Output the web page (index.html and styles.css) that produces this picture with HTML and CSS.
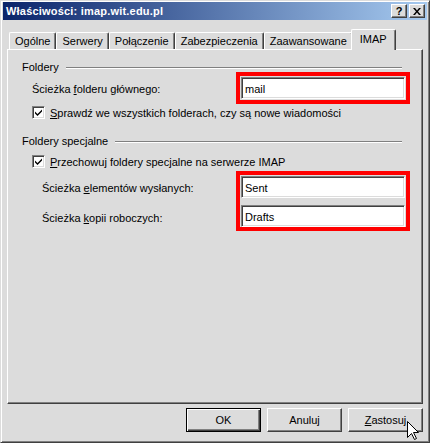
FILE: index.html
```html
<!DOCTYPE html>
<html lang="pl">
<head>
  <meta charset="UTF-8">
  <title>Właściwości: imap.wit.edu.pl</title>
  <link rel="stylesheet" href="styles.css">
</head>
<body>
<div class="window">
  <div class="titlebar">
    <span class="title">Właściwości: imap.wit.edu.pl</span>
    <div class="caption">
      <span class="cap-btn cap-help">?</span>
      <span class="cap-btn">
        <svg width="8" height="7" viewBox="0 0 8 7"><path d="M0 0h2l2 2.5L6 0h2L5 3.5 8 7H6L4 4.5 2 7H0l3-3.5z" fill="#000"/></svg>
      </span>
    </div>
  </div>

  <div class="content">
    <div class="tabs">
      <div class="tab">Ogólne</div>
      <div class="tab">Serwery</div>
      <div class="tab">Połączenie</div>
      <div class="tab">Zabezpieczenia</div>
      <div class="tab">Zaawansowane</div>
      <div class="tab active">IMAP</div>
    </div>

    <div class="panel">
      <div class="legend"><span>Foldery</span><i class="legend-line"></i></div>
      <div class="group">
        <div class="row">
          <span class="label">Ścieżka <u>f</u>olderu głównego:</span>
          <div class="mark mark-one">
            <div class="field">mail</div>
          </div>
        </div>
        <div class="check">
          <span class="box"><svg width="7" height="7" viewBox="0 0 7 7"><path d="M0 2.5l2.5 2.5L7 0.5v2L2.5 7 0 4.5z" fill="#000"/></svg></span>
          <span><u>S</u>prawdź we wszystkich folderach, czy są nowe wiadomości</span>
        </div>
      </div>

      <div class="legend legend-two"><span>Foldery specjalne</span><i class="legend-line"></i></div>
      <div class="group">
        <div class="check check-two">
          <span class="box"><svg width="7" height="7" viewBox="0 0 7 7"><path d="M0 2.5l2.5 2.5L7 0.5v2L2.5 7 0 4.5z" fill="#000"/></svg></span>
          <span><u>P</u>rzechowuj foldery specjalne na serwerze IMAP</span>
        </div>
        <div class="row row-paths">
          <div class="labels">
            <span class="label">Ścieżka <u>e</u>lementów wysłanych:</span>
            <span class="label">Ścieżka <u>k</u>opii roboczych:</span>
          </div>
          <div class="mark mark-two">
            <div class="field">Sent</div>
            <div class="field">Drafts</div>
          </div>
        </div>
      </div>
    </div>

    <div class="buttons">
      <div class="btn btn-default">OK</div>
      <div class="btn">Anuluj</div>
      <div class="btn"><u>Z</u>astosuj</div>
    </div>
  </div>

  <svg class="cursor" width="12" height="19" viewBox="0 0 12 19">
    <path d="M0.5 0.5V16.5L4.5 12.5L7.5 18.5L9.5 17.5L6.5 11.5H11.5Z" fill="#fff" stroke="#000" stroke-width="1"/>
  </svg>
</div>
</body>
</html>
```

FILE: styles.css
```css
body {
  margin: 0;
  background: #dcdcdc;
  font-family: "Liberation Sans", Arial, sans-serif;
  font-size: 11px;
  color: #000;
}
.window {
  position: relative;
  width: 430px;
  height: 443px;
  box-sizing: border-box;
  background: #dcdcdc;
  border: 1px solid;
  border-color: #dcdcdc #404040 #404040 #dcdcdc;
  box-shadow: inset 1px 1px #fff, inset -1px -1px #808080;
  padding: 1px 2px 2px 2px;
}

/* pasek tytułu */
.titlebar {
  height: 18px;
  display: flex;
  align-items: center;
  justify-content: space-between;
  background: linear-gradient(to right, #0a246a, #a6caf0);
  padding: 0 2px 0 3px;
}
.title {
  color: #fff;
  font-weight: bold;
  font-size: 11px;
  letter-spacing: 0.2px;
}
.caption {
  display: flex;
  gap: 2px;
}
.cap-btn {
  width: 16px;
  height: 14px;
  box-sizing: border-box;
  display: flex;
  align-items: center;
  justify-content: center;
  background: #dcdcdc;
  border: 1px solid;
  border-color: #fff #404040 #404040 #fff;
  box-shadow: inset -1px -1px #808080;
}
.cap-help {
  font-weight: bold;
  font-size: 11px;
  line-height: 12px;
}

.content {
  padding: 9px 4px 0 4px;
}

/* zakładki */
.tabs {
  display: flex;
  align-items: flex-end;
  height: 20px;
  padding-left: 2px;
}
.tab {
  height: 17px;
  box-sizing: border-box;
  padding: 2px 5px 0 5px;
  border: 1px solid;
  border-bottom: none;
  border-color: #fff #404040 #fff #fff;
  border-radius: 2px 2px 0 0;
  box-shadow: inset -1px 0 #808080;
}
.tab.active {
  position: relative;
  z-index: 1;
  height: 21px;
  margin: 0 -2px -1px -2px;
  padding: 3px 8px 0 8px;
  background: #dcdcdc;
}

/* panel */
.panel {
  height: 355px;
  box-sizing: border-box;
  border: 1px solid;
  border-color: #fff #404040 #404040 #fff;
  box-shadow: inset -1px -1px #808080;
  padding: 12px 12px 0 14px;
}
.legend {
  display: flex;
  align-items: center;
  height: 11px;
  line-height: 11px;
}
.legend-line {
  flex: 1;
  height: 0;
  border-top: 1px solid #808080;
  border-bottom: 1px solid #fff;
  margin: 0 8px 0 7px;
}
.legend-two {
  margin-top: 17px;
}
.group {
  padding-left: 10px;
}
.row {
  display: flex;
  align-items: center;
  justify-content: space-between;
}
.mark {
  width: 174px;
  box-sizing: border-box;
  border: 4px solid #ff0000;
  padding: 1px;
  display: flex;
  flex-direction: column;
}
.mark-one {
  margin-top: -1px;
}
.mark-two {
  gap: 7px;
  padding: 1px 1px 0 1px;
}
.field {
  height: 22px;
  box-sizing: border-box;
  background: #fff;
  border: 1px solid;
  border-color: #808080 #fff #fff #808080;
  box-shadow: inset 1px 1px #404040, inset -1px -1px #dcdcdc;
  padding: 4px 3px 0 3px;
  line-height: 14px;
}
.check {
  display: flex;
  align-items: center;
  gap: 5px;
  margin-top: 2px;
  height: 13px;
}
.check-two {
  margin-top: 8px;
}
.box {
  width: 13px;
  height: 13px;
  box-sizing: border-box;
  background: #fff;
  border: 1px solid;
  border-color: #808080 #fff #fff #808080;
  box-shadow: inset 1px 1px #404040, inset -1px -1px #dcdcdc;
  display: flex;
  align-items: center;
  justify-content: center;
}
.row-paths {
  margin-top: 3px;
}
.labels {
  display: flex;
  flex-direction: column;
  gap: 16px;
  padding-left: 10px;
  padding-top: 3px;
}
.labels .label {
  line-height: 14px;
}

/* przyciski */
.buttons {
  display: flex;
  justify-content: flex-end;
  gap: 6px;
  margin-top: 4px;
}
.btn {
  width: 75px;
  height: 24px;
  box-sizing: border-box;
  display: flex;
  align-items: center;
  justify-content: center;
  border: 1px solid;
  border-color: #fff #404040 #404040 #fff;
  box-shadow: inset -1px -1px #808080;
}
.btn-default {
  border-color: #000;
  box-shadow: inset 1px 1px #fff, inset -1px -1px #404040, inset -2px -2px #808080;
}

.cursor {
  position: absolute;
  left: 406px;
  top: 420px;
}
```
